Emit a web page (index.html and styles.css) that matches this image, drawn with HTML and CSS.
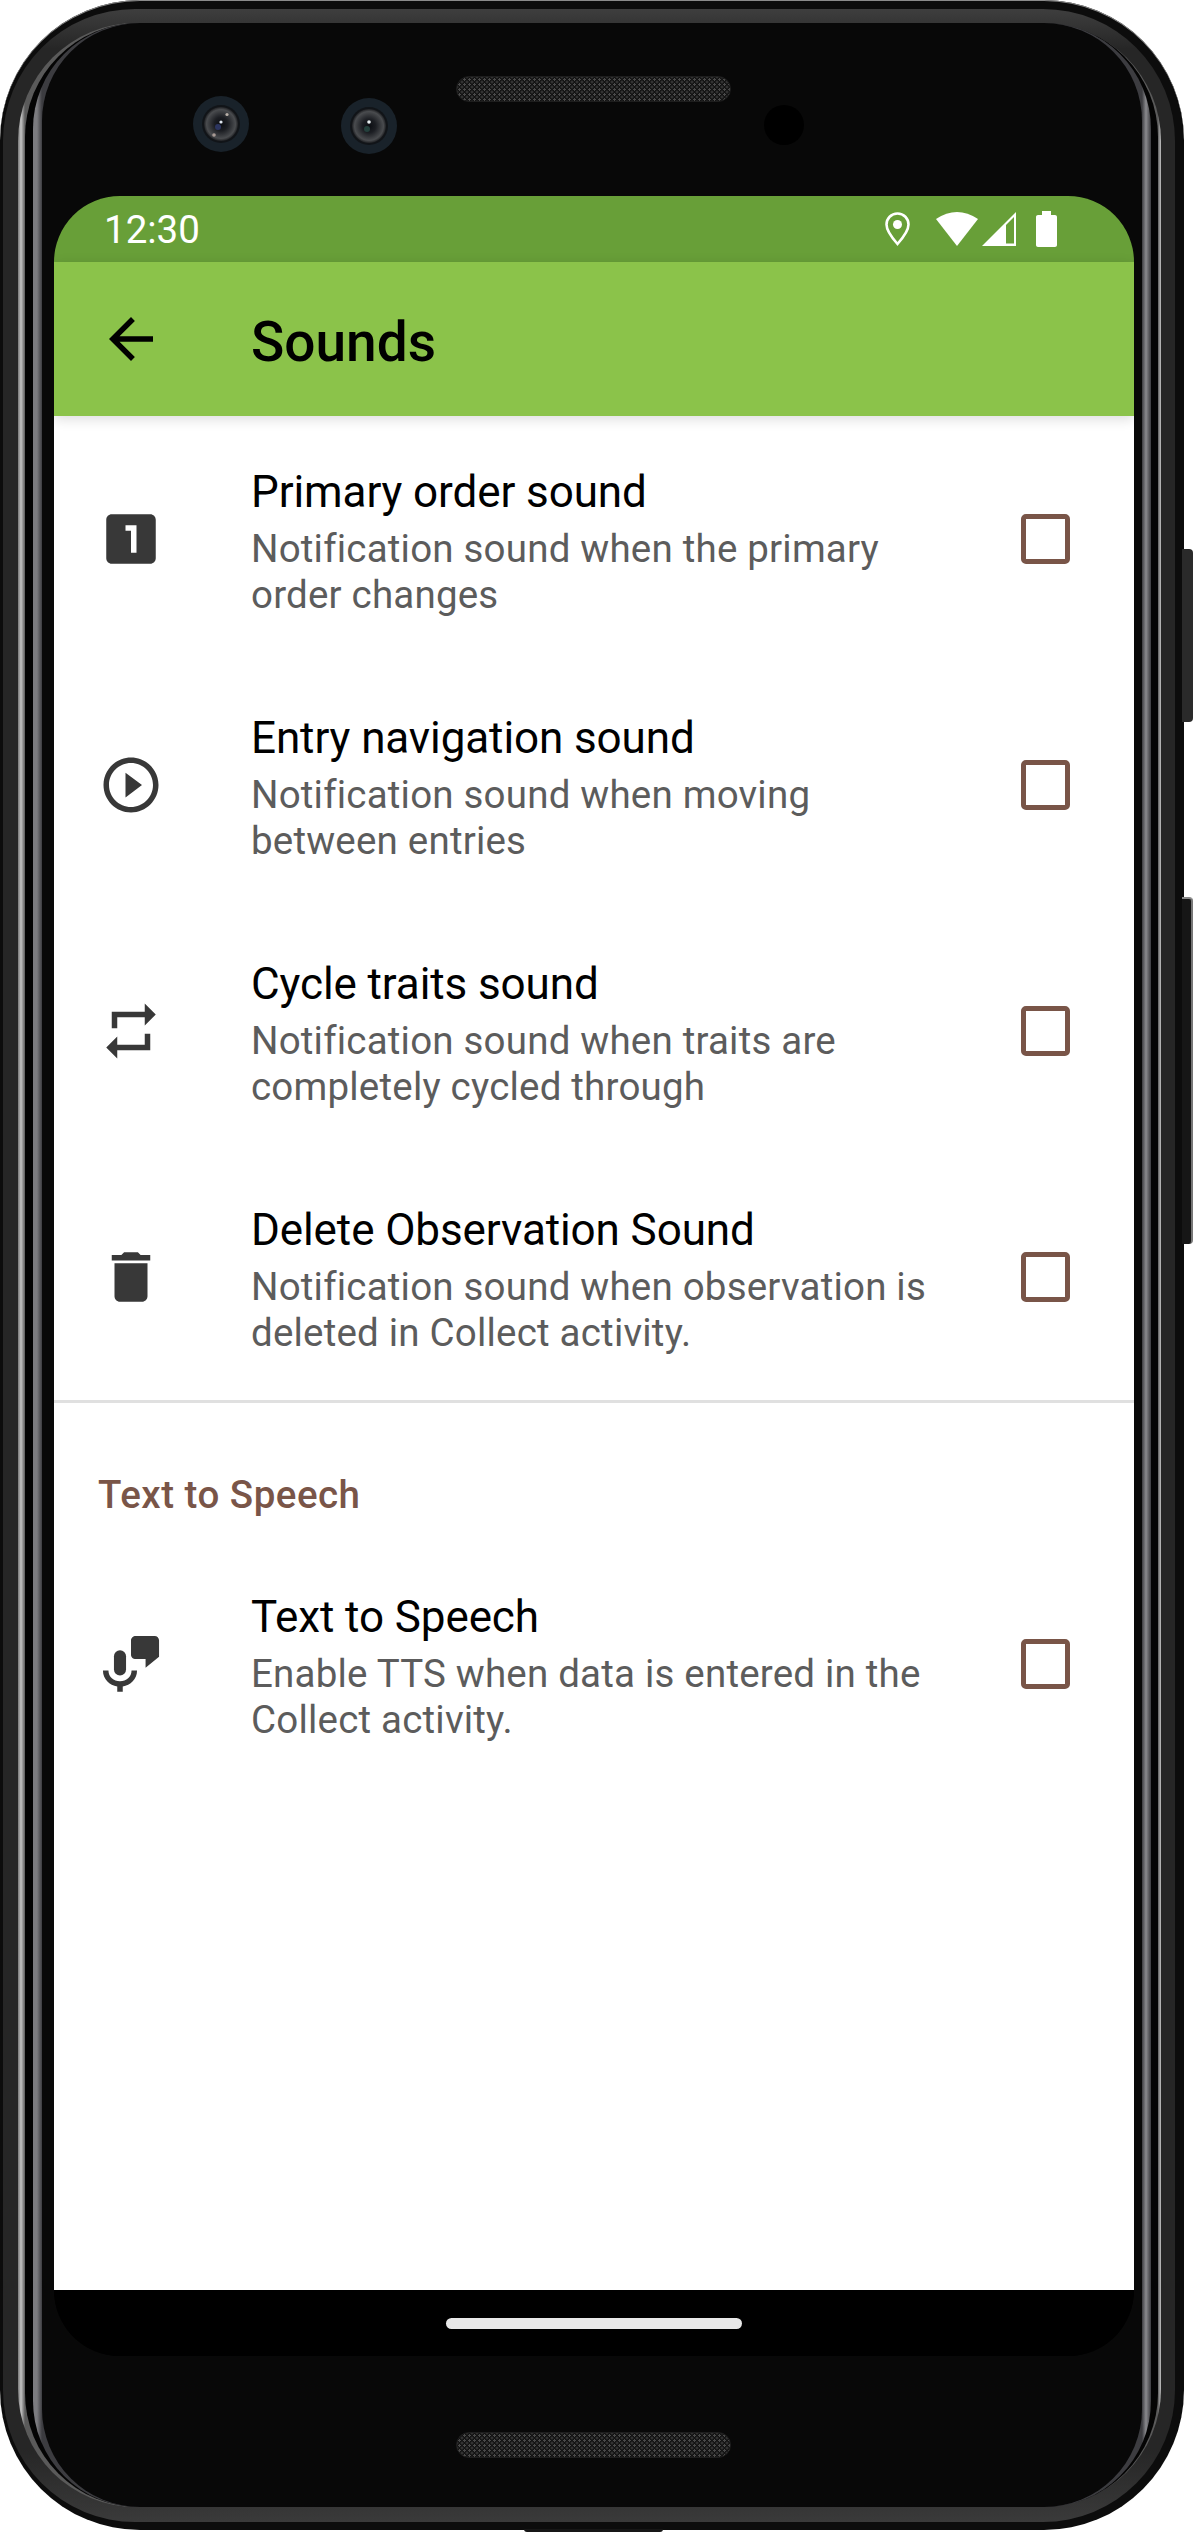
FILE: index.html
```html
<!DOCTYPE html>
<html lang="en">
<head>
    <meta charset="UTF-8">
    <meta name="viewport" content="width=device-width, initial-scale=1.0">
    <title>Sounds</title>
    <link rel="stylesheet" href="styles.css">
</head>
<body>
    <div class="phone">
        <div class="side-button volume"></div>
        <div class="side-button power"></div>
        <div class="usb-notch"></div>

        <div class="shell">
            <div class="shine">
                <div class="groove">
                    <div class="inner-rim">
                        <div class="face">

                            <!-- Cameras and speaker -->
                            <div class="bezel-top">
                                <svg class="camera camera-one" viewBox="0 0 56 56">
                                    <defs>
                                        <radialGradient id="lens" cx="50%" cy="50%" r="50%">
                                            <stop offset="0%" stop-color="#0b0d12"/>
                                            <stop offset="40%" stop-color="#1c1e23"/>
                                            <stop offset="85%" stop-color="#4a4c4f"/>
                                            <stop offset="100%" stop-color="#202124"/>
                                        </radialGradient>
                                    </defs>
                                    <circle cx="28" cy="28" r="28" fill="#19222a"/>
                                    <circle cx="28" cy="28" r="19" fill="#111418"/>
                                    <circle cx="28" cy="28" r="17" fill="url(#lens)"/>
                                    <circle cx="25" cy="31" r="3" fill="#2c3560"/>
                                    <circle cx="28" cy="26" r="1.6" fill="#dfe6f0"/>
                                    <circle cx="34" cy="18.5" r="1.6" fill="#b9b0a8"/>
                                    <circle cx="21" cy="39" r="1.8" fill="#a89a94"/>
                                </svg>
                                <svg class="camera camera-two" viewBox="0 0 56 56">
                                    <circle cx="28" cy="28" r="28" fill="#19222a"/>
                                    <circle cx="28" cy="28" r="19" fill="#111418"/>
                                    <circle cx="28" cy="28" r="17" fill="url(#lens)"/>
                                    <circle cx="26" cy="31" r="3" fill="#24403c"/>
                                    <circle cx="28" cy="24" r="1.8" fill="#e8eef0"/>
                                </svg>
                                <div class="speaker speaker-top"></div>
                                <div class="sensor"></div>
                            </div>

                            <div class="screen">
                                <div class="status-bar">
                                    <span class="clock">12:30</span>
                                    <div class="status-icons">
                                        <svg class="st-location" viewBox="0 0 25 34">
                                            <path d="M12.5 1.5C6.2 1.5 1.5 6.4 1.5 12.6c0 6 5.600 13.400 11 19.400 5.400-6 11-13.400 11-19.400 0-6.200-4.700-11.100-11-11.100z" fill="none" stroke="#fff" stroke-width="2.600"/>
                                            <circle cx="12.500" cy="12.500" r="4.500" fill="#fff"/>
                                        </svg>
                                        <svg class="st-wifi" viewBox="0 0 42 34">
                                            <path d="M0 7Q21-7 42 7L21 34Z" fill="#fff"/>
                                        </svg>
                                        <svg class="st-signal" viewBox="0 0 34 34">
                                            <path d="M0 34L34 0V34ZM24 31.500H32V5L24 13Z" fill="#fff" fill-rule="evenodd"/>
                                        </svg>
                                        <svg class="st-battery" viewBox="0 0 21 36">
                                            <path d="M6 0h9v4h4c1.100 0 2 .9 2 2v28c0 1.100-.9 2-2 2H2c-1.100 0-2-.9-2-2V6c0-1.100.9-2 2-2h4z" fill="#fff"/>
                                        </svg>
                                    </div>
                                </div>

                                <div class="toolbar">
                                    <svg class="back-icon" viewBox="0 0 24 24">
                                        <path d="M20 11H7.830l5.590-5.590L12 4l-8 8 8 8 1.410-1.410L7.830 13H20v-2z"/>
                                    </svg>
                                    <h1>Sounds</h1>
                                </div>

                                <div class="pref-list">
                                    <div class="pref-group">
                                        <div class="pref-row">
                                            <svg class="pref-icon" viewBox="0 0 24 24">
                                                <path d="M19 3H5c-1.100 0-2 .9-2 2v14c0 1.100.9 2 2 2h14c1.100 0 2-.9 2-2V5c0-1.100-.9-2-2-2zm-5 14h-2V9h-2V7h4v10z"/>
                                            </svg>
                                            <div class="pref-text">
                                                <div class="pref-title">Primary order sound</div>
                                                <div class="pref-summary">Notification sound when the primary order changes</div>
                                            </div>
                                            <div class="checkbox"></div>
                                        </div>
                                        <div class="pref-row">
                                            <svg class="pref-icon" viewBox="0 0 24 24">
                                                <path d="M10 16.500l6-4.500-6-4.500v9zM12 2C6.480 2 2 6.480 2 12s4.480 10 10 10 10-4.480 10-10S17.520 2 12 2zm0 18c-4.410 0-8-3.590-8-8s3.590-8 8-8 8 3.590 8 8-3.590 8-8 8z"/>
                                            </svg>
                                            <div class="pref-text">
                                                <div class="pref-title">Entry navigation sound</div>
                                                <div class="pref-summary">Notification sound when moving between entries</div>
                                            </div>
                                            <div class="checkbox"></div>
                                        </div>
                                        <div class="pref-row">
                                            <svg class="pref-icon" viewBox="0 0 24 24">
                                                <path d="M7 7h10v3l4-4-4-4v3H5v6h2V7zm10 10H7v-3l-4 4 4 4v-3h12v-6h-2v4z"/>
                                            </svg>
                                            <div class="pref-text">
                                                <div class="pref-title">Cycle traits sound</div>
                                                <div class="pref-summary">Notification sound when traits are completely cycled through</div>
                                            </div>
                                            <div class="checkbox"></div>
                                        </div>
                                        <div class="pref-row">
                                            <svg class="pref-icon" viewBox="0 0 24 24">
                                                <path d="M6 19c0 1.100.9 2 2 2h8c1.100 0 2-.9 2-2V7H6v12zM19 4h-3.500l-1-1h-5l-1 1H5v2h14V4z"/>
                                            </svg>
                                            <div class="pref-text">
                                                <div class="pref-title">Delete Observation Sound</div>
                                                <div class="pref-summary">Notification sound when observation is deleted in Collect activity.</div>
                                            </div>
                                            <div class="checkbox"></div>
                                        </div>
                                    </div>

                                    <div class="pref-group with-divider">
                                        <div class="pref-category">Text to Speech</div>
                                        <div class="pref-row">
                                            <svg class="pref-icon" viewBox="0 0 24 24">
                                                <rect x="5.800" y="7" width="4.400" height="9.200" rx="2.200"/>
                                                <path d="M1.800 14.400h2c0 2.400 1.900 3.900 4.200 3.900s4.200-1.500 4.200-3.900h2c0 3.200-2.400 5.400-5.200 5.800v1.900H7v-1.900C4.200 19.800 1.800 17.600 1.800 14.400z"/>
                                                <path d="M13.700 1.800h6.900c.9 0 1.600.7 1.600 1.600v6L17.300 13.400V10.200h-3.600c-.9 0-1.700-.7-1.700-1.600V3.400c0-.9.8-1.600 1.700-1.600z"/>
                                            </svg>
                                            <div class="pref-text">
                                                <div class="pref-title">Text to Speech</div>
                                                <div class="pref-summary">Enable TTS when data is entered in the Collect activity.</div>
                                            </div>
                                            <div class="checkbox"></div>
                                        </div>
                                    </div>
                                </div>

                                <div class="nav-bar">
                                    <div class="nav-pill"></div>
                                </div>
                            </div>

                            <div class="bezel-bottom">
                                <div class="speaker"></div>
                            </div>

                        </div>
                    </div>
                </div>
            </div>
        </div>
    </div>
</body>
</html>
```

FILE: styles.css
```css
/* Page */
html, body {
    margin: 0;
    padding: 0;
    background-color: #fff;
}

body {
    width: 1194px;
    height: 2532px;
    overflow: hidden;
    font-family: Roboto, "Noto Sans", sans-serif;
}

/* Phone body: nested rings, each one inset from the last */
.phone {
    position: relative;
    box-sizing: border-box;
    display: flex;
    width: 1184px;
    height: 2530px;
    padding: 9px 9px 8px 3px;
    background-color: #0c0c0c;
    border-radius: 140px;
    box-shadow: inset 0 1px 0 #8a8a8a;
}

.shell {
    flex: 1;
    display: flex;
    padding: 14px 14px 15px 15px;
    background-color: #242424;
    background-image: linear-gradient(#3e3e3e, #262626 40px, #262626 2440px, #3a3a3a);
    border-radius: 132px;
}

.shine {
    flex: 1;
    display: flex;
    padding: 0 3px 0 7px;
    background-image: linear-gradient(90deg, #777 0, #c4c4c4 3px, #5a5a5a 7px, #5a5a5a calc(100% - 3px), #c4c4c4 100%);
    border-radius: 118px;
}

.groove {
    flex: 1;
    display: flex;
    padding: 0 7px 0 8px;
    background-color: #040404;
    border-radius: 114px;
}

.inner-rim {
    flex: 1;
    display: flex;
    padding: 0 9px;
    background-image: linear-gradient(90deg, #7c7c80 0, #7c7c80 4px, #3c3c40 9px, #3c3c40 calc(100% - 9px), #8a8a8e calc(100% - 5px), #3a3a3e 100%);
    border-radius: 106px;
}

.face {
    flex: 1;
    display: flex;
    flex-direction: column;
    padding: 0 8px 0 12px;
    background-color: #080808;
    border-radius: 98px;
}

/* Buttons on the right edge */
.side-button {
    position: absolute;
    left: 1182px;
    width: 11px;
    background-color: #2a2a2a;
    border-radius: 0 4px 4px 0;
}

.volume {
    top: 549px;
    height: 173px;
}

.power {
    top: 897px;
    height: 347px;
    background-color: #161616;
    border-top: 2px solid #888;
    border-right: 2px solid #777;
    box-sizing: border-box;
}

.usb-notch {
    position: absolute;
    left: 524px;
    bottom: -2px;
    width: 139px;
    height: 3px;
    background-color: #161616;
    border-radius: 0 0 3px 3px;
}

/* Top bezel */
.bezel-top {
    display: flex;
    align-items: flex-start;
    height: 173px;
    padding-left: 139px;
    box-sizing: border-box;
}

.camera {
    flex: none;
    width: 56px;
    height: 56px;
}

.camera-one {
    margin-top: 73px;
}

.camera-two {
    margin: 75px 0 0 92px;
}

.speaker {
    flex: none;
    box-sizing: border-box;
    width: 275px;
    height: 26px;
    border: 1px solid #1e1e1e;
    border-radius: 13px;
    background-color: #121212;
    background-image:
        radial-gradient(circle, #4a4a4a 1px, transparent 1.3px),
        radial-gradient(circle, #3c3c3c 1px, transparent 1.3px);
    background-size: 5px 5px;
    background-position: 0 0, 2.5px 2.5px;
}

.speaker-top {
    margin: 53px 0 0 59px;
}

.sensor {
    flex: none;
    width: 40px;
    height: 40px;
    margin: 82px 0 0 33px;
    border-radius: 50%;
    background-color: #000;
}

/* Screen */
.screen {
    display: flex;
    flex-direction: column;
    width: 1080px;
    height: 2160px;
    border-radius: 66px;
    overflow: hidden;
    background-color: #000;
}

.status-bar {
    flex: none;
    display: flex;
    align-items: center;
    justify-content: space-between;
    height: 66px;
    padding: 0 77px 0 50px;
    background-color: #689f38;
    color: #fff;
}

.clock {
    font-size: 38.5px;
}

.status-icons {
    display: flex;
    align-items: center;
}

.st-location {
    width: 25px;
    height: 34px;
}

.st-wifi {
    width: 42px;
    height: 34px;
    margin-left: 26px;
}

.st-signal {
    width: 34px;
    height: 34px;
    margin-left: 4px;
}

.st-battery {
    width: 21px;
    height: 36px;
    margin-left: 20px;
}

.toolbar {
    position: relative;
    z-index: 1;
    flex: none;
    display: flex;
    align-items: center;
    height: 154px;
    padding-left: 44px;
    background-color: #8bc34a;
    box-shadow: 0 3px 12px rgba(0, 0, 0, 0.14);
}

.back-icon {
    flex: none;
    width: 66px;
    height: 66px;
}

.toolbar h1 {
    margin: 6px 0 0 87px;
    font-size: 55px;
    font-weight: 500;
    color: #000;
}

/* Preference list */
.pref-list {
    flex: 1;
    background-color: #fff;
}

.with-divider {
    border-top: 3px solid #e0e0e0;
}

.pref-row {
    display: flex;
    align-items: center;
    height: 246px;
    padding: 0 64px 0 44px;
    box-sizing: border-box;
}

.pref-icon {
    flex: none;
    width: 66px;
    height: 66px;
    fill: #383838;
}

.pref-text {
    flex: 1;
    margin: 0 73px 0 87px;
    padding-top: 6px;
}

.pref-title {
    font-size: 44px;
    letter-spacing: -0.1px;
    color: #000;
    margin-bottom: 8px;
}

.pref-summary {
    font-size: 38.5px;
    letter-spacing: 0.2px;
    line-height: 46px;
    color: #5c5c5c;
}

.checkbox {
    flex: none;
    box-sizing: border-box;
    width: 49.5px;
    height: 49.5px;
    border: 5.5px solid #795548;
    border-radius: 5px;
}

.pref-category {
    height: 138px;
    padding: 69px 0 0 44px;
    box-sizing: border-box;
    font-size: 38.5px;
    letter-spacing: 0.5px;
    line-height: 46px;
    font-weight: 500;
    color: #795548;
}

/* Navigation bar */
.nav-bar {
    flex: none;
    display: flex;
    align-items: center;
    justify-content: center;
    height: 66px;
    background-color: #000;
}

.nav-pill {
    width: 296px;
    height: 11px;
    border-radius: 6px;
    background-color: #e8e8e8;
}

/* Bottom bezel */
.bezel-bottom {
    display: flex;
    justify-content: center;
    padding: 76px 2px 0 0;
}
```
